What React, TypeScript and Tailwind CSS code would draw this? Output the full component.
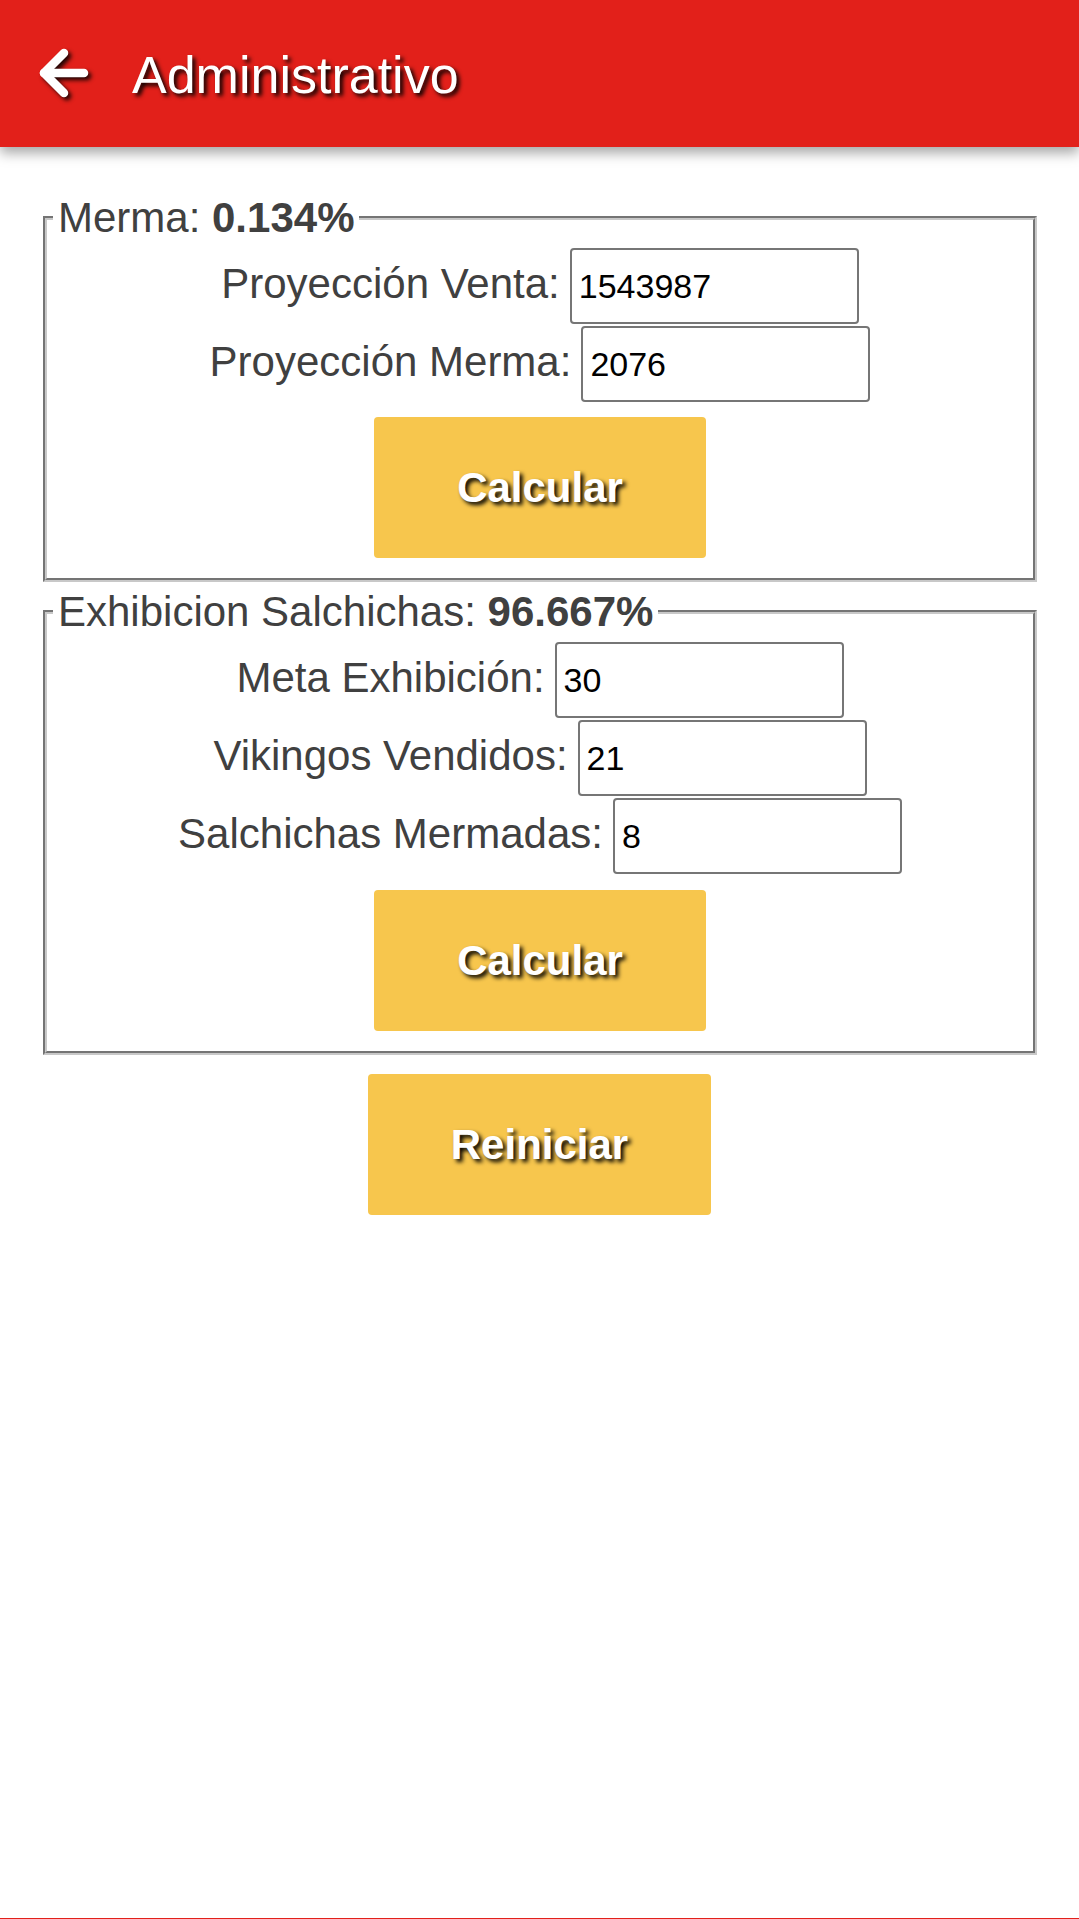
import { useState } from "react";

const font = "font-['Liberation_Sans',Arial,sans-serif]";

function Field({
  label,
  value,
  onChange,
}: {
  label: string;
  value: string;
  onChange: (v: string) => void;
}) {
  return (
    <div className="flex items-baseline justify-center gap-[10px]">
      <label className="text-[42px] leading-[48px] text-[#404040]">{label}</label>
      <input
        type="text"
        inputMode="numeric"
        value={value}
        onChange={(e) => onChange(e.target.value)}
        className="w-[289px] h-[76px] border-2 border-[#767676] rounded-[4px] px-[7px] text-[34px] text-black bg-white outline-none"
      />
    </div>
  );
}

function YellowButton({ label, onClick }: { label: string; onClick: () => void }) {
  return (
    <button
      onClick={onClick}
      className="h-[141px] px-[83px] bg-[#F7C64D] rounded-[4px] text-[42px] leading-[48px] font-bold text-white [text-shadow:3px_3px_4px_#000] cursor-pointer"
    >
      {label}
    </button>
  );
}

export default function App() {
  const [venta, setVenta] = useState("1543987");
  const [merma, setMerma] = useState("2076");
  const [mermaPct, setMermaPct] = useState("0.134");

  const [meta, setMeta] = useState("30");
  const [vikingos, setVikingos] = useState("21");
  const [mermadas, setMermadas] = useState("8");
  const [exhPct, setExhPct] = useState("96.667");

  const calcMerma = () => {
    const v = parseFloat(venta);
    const m = parseFloat(merma);
    if (!v) return;
    setMermaPct((Math.round((m / v) * 100 * 1000) / 1000).toString());
  };

  const calcExh = () => {
    const mt = parseFloat(meta);
    const vk = parseFloat(vikingos) || 0;
    const sm = parseFloat(mermadas) || 0;
    if (!mt) return;
    setExhPct((Math.round(((vk + sm) / mt) * 100 * 1000) / 1000).toString());
  };

  const reset = () => {
    setVenta("");
    setMerma("");
    setMermaPct("0");
    setMeta("");
    setVikingos("");
    setMermadas("");
    setExhPct("0");
  };

  return (
    <div className={`${font} min-h-[1919px] flex flex-col bg-white`}>
      {/* Header */}
      <header className="relative z-10 h-[147px] bg-[#E2201A] flex items-center shadow-[0_6px_12px_rgba(0,0,0,0.35)]">
        <button className="ml-[38px] cursor-pointer" aria-label="Volver">
          <svg
            width="56"
            height="56"
            viewBox="0 0 56 56"
            fill="none"
            stroke="white"
            strokeWidth="8.5"
            strokeLinecap="round"
            strokeLinejoin="round"
            className="[filter:drop-shadow(3px_3px_2px_rgba(0,0,0,0.85))]"
          >
            <path d="M46 27H6" />
            <path d="M26 7 6 27l20 20" />
          </svg>
        </button>
        <h1 className="ml-[38px] mt-[2px] text-[52px] leading-[60px] text-white [text-shadow:3px_3px_4px_#000]">
          Administrativo
        </h1>
      </header>

      {/* Merma */}
      <fieldset className="ml-[43px] mr-[42px] mt-[47px] border-4 [border-style:groove] border-[#c8c8c8] px-[6px] pt-[6px] pb-[20px]">
        <legend className="px-[5px] text-[42px] leading-[48px] text-[#404040]">
          Merma: <b>{mermaPct}%</b>
        </legend>
        <div className="flex flex-col gap-[2px]">
          <Field label="Proyección Venta:" value={venta} onChange={setVenta} />
          <Field label="Proyección Merma:" value={merma} onChange={setMerma} />
        </div>
        <div className="flex justify-center mt-[15px]">
          <YellowButton label="Calcular" onClick={calcMerma} />
        </div>
      </fieldset>

      {/* Exhibicion */}
      <fieldset className="ml-[43px] mr-[42px] mt-[6px] border-4 [border-style:groove] border-[#c8c8c8] px-[6px] pt-[6px] pb-[20px]">
        <legend className="px-[5px] text-[42px] leading-[48px] text-[#404040]">
          Exhibicion Salchichas: <b>{exhPct}%</b>
        </legend>
        <div className="flex flex-col gap-[2px]">
          <Field label="Meta Exhibición:" value={meta} onChange={setMeta} />
          <Field label="Vikingos Vendidos:" value={vikingos} onChange={setVikingos} />
          <Field label="Salchichas Mermadas:" value={mermadas} onChange={setMermadas} />
        </div>
        <div className="flex justify-center mt-[16px]">
          <YellowButton label="Calcular" onClick={calcExh} />
        </div>
      </fieldset>

      <div className="flex justify-center mt-[19px]">
        <YellowButton label="Reiniciar" onClick={reset} />
      </div>

      <div className="flex-1" />
      <div className="h-[1px] bg-[#E2201A]" />
    </div>
  );
}
